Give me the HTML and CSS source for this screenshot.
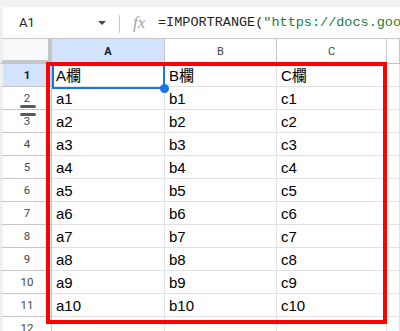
FILE: index.html
```html
<!DOCTYPE html>
<html lang="ja">
<head>
    <meta charset="UTF-8">
    <title>IMPORTRANGE</title>
    <link rel="stylesheet" href="styles.css">
</head>
<body>
<div class="top-strip"></div>

<div class="formula-bar">
    <div class="name-box">
        <span class="cell-ref">A1</span>
        <span class="drop-arrow"></span>
    </div>
    <div class="divider"></div>
    <span class="fx">fx</span>
    <div class="formula"><span class="fn">=IMPORTRANGE(</span><span class="str">"https://docs.goog</span></div>
</div>

<div class="sheet">
    <div class="corner"></div>
    <div class="col-head active">A</div>
    <div class="col-head">B</div>
    <div class="col-head">C</div>
    <div class="col-head"></div>

    <div class="row-head active">1</div>
    <div class="cell">A欄</div><div class="cell">B欄</div><div class="cell">C欄</div><div class="cell"></div>

    <div class="row-head">2</div>
    <div class="cell">a1</div><div class="cell">b1</div><div class="cell">c1</div><div class="cell"></div>
    <div class="row-head">3</div>
    <div class="cell">a2</div><div class="cell">b2</div><div class="cell">c2</div><div class="cell"></div>
    <div class="row-head">4</div>
    <div class="cell">a3</div><div class="cell">b3</div><div class="cell">c3</div><div class="cell"></div>
    <div class="row-head">5</div>
    <div class="cell">a4</div><div class="cell">b4</div><div class="cell">c4</div><div class="cell"></div>
    <div class="row-head">6</div>
    <div class="cell">a5</div><div class="cell">b5</div><div class="cell">c5</div><div class="cell"></div>
    <div class="row-head">7</div>
    <div class="cell">a6</div><div class="cell">b6</div><div class="cell">c6</div><div class="cell"></div>
    <div class="row-head">8</div>
    <div class="cell">a7</div><div class="cell">b7</div><div class="cell">c7</div><div class="cell"></div>
    <div class="row-head">9</div>
    <div class="cell">a8</div><div class="cell">b8</div><div class="cell">c8</div><div class="cell"></div>
    <div class="row-head">10</div>
    <div class="cell">a9</div><div class="cell">b9</div><div class="cell">c9</div><div class="cell"></div>
    <div class="row-head">11</div>
    <div class="cell">a10</div><div class="cell">b10</div><div class="cell">c10</div><div class="cell"></div>
    <div class="row-head">12</div>
    <div class="cell"></div><div class="cell"></div><div class="cell"></div><div class="cell"></div>

    <!-- overlays -->
    <div class="selection"><span class="fill-handle"></span></div>
    <div class="resize-grip"><span></span><span></span></div>
    <div class="highlight"></div>
</div>
</body>
</html>
```

FILE: styles.css
```css
body {
    margin: 0;
    width: 400px;
    height: 331px;
    overflow: hidden;
    background: #fff;
    font-family: "Liberation Sans", Arial, "Noto Sans CJK JP", sans-serif;
}
.top-strip {
    height: 7px;
    background: #f0f2f4;
}
.formula-bar {
    display: flex;
    align-items: center;
    height: 31px;
    border-bottom: 1px solid #c4c7c5;
    border-left: 3px solid #eef0f2;
    white-space: nowrap;
    overflow: hidden;
}
.name-box {
    display: flex;
    flex-shrink: 0;
    align-items: center;
    width: 116px;
    padding-left: 16px;
    box-sizing: border-box;
}
.cell-ref {
    font-family: Roboto, "Liberation Sans", sans-serif;
    font-size: 13px;
    color: #1f1f1f;
    flex: 1;
}
.drop-arrow {
    width: 0;
    height: 0;
    border-left: 4px solid transparent;
    border-right: 4px solid transparent;
    border-top: 4px solid #444746;
    margin-right: 13px;
}
.divider {
    flex-shrink: 0;
    width: 1px;
    height: 18px;
    background: #c4c7c5;
    margin-top: 3px;
}
.fx {
    flex-shrink: 0;
    font-family: "Liberation Serif", serif;
    font-style: italic;
    font-size: 17px;
    color: #a0a4a8;
    margin-left: 13px;
    width: 25px;
}
.formula {
    flex-shrink: 0;
    font-family: "Liberation Mono", monospace;
    font-size: 13.5px;
    color: #1f1f1f;
}
.formula .str {
    color: #188038;
}

.sheet {
    position: relative;
    display: grid;
    grid-template-columns: 52px 113px 112px 110px 1fr;
    grid-template-rows: 25px repeat(12, 23px);
}
.corner {
    background: #f8f9fa;
    border-right: 4px solid #c4c7c5;
    border-bottom: 4px solid #c4c7c5;
    border-left: 3px solid #eef0f2;
}
.col-head {
    display: flex;
    align-items: center;
    justify-content: center;
    background: #fff;
    border-right: 1px solid #c4c7c5;
    border-bottom: 1px solid #c4c7c5;
    font-family: Roboto, "Liberation Sans", sans-serif;
    font-size: 11px;
    color: #444746;
}
.col-head.active {
    background: #d3e3fd;
    color: #041e49;
    font-weight: bold;
}
.row-head {
    display: flex;
    align-items: center;
    justify-content: center;
    background: #fff;
    border-left: 3px solid #eef0f2;
    border-right: 1px solid #c4c7c5;
    border-bottom: 1px solid #c4c7c5;
    font-family: Roboto, "Liberation Sans", sans-serif;
    font-size: 11.5px;
    color: #444746;
}
.row-head.active {
    background: #d3e3fd;
    color: #041e49;
    font-weight: bold;
}
.cell {
    display: flex;
    align-items: flex-end;
    padding: 0 4px 3px;
    border-right: 1px solid #e1e1e1;
    border-bottom: 1px solid #e1e1e1;
    font-size: 15px;
    line-height: 1;
    color: #000;
    white-space: nowrap;
}
.selection {
    position: absolute;
    left: 52px;
    top: 25px;
    width: 113px;
    height: 25px;
    border: 2px solid #1a73e8;
    box-sizing: border-box;
}
.fill-handle {
    position: absolute;
    right: -6px;
    bottom: -6px;
    width: 9px;
    height: 9px;
    border-radius: 50%;
    background: #1a73e8;
}
.resize-grip {
    position: absolute;
    left: 20px;
    top: 66px;
    width: 16px;
}
.resize-grip span {
    display: block;
    height: 3px;
    border-radius: 2px;
    background: #575a5e;
    margin-bottom: 5px;
}
.highlight {
    position: absolute;
    left: 46px;
    top: 23px;
    width: 341px;
    height: 262px;
    border: 4px solid #ff0000;
    box-sizing: border-box;
}
```
